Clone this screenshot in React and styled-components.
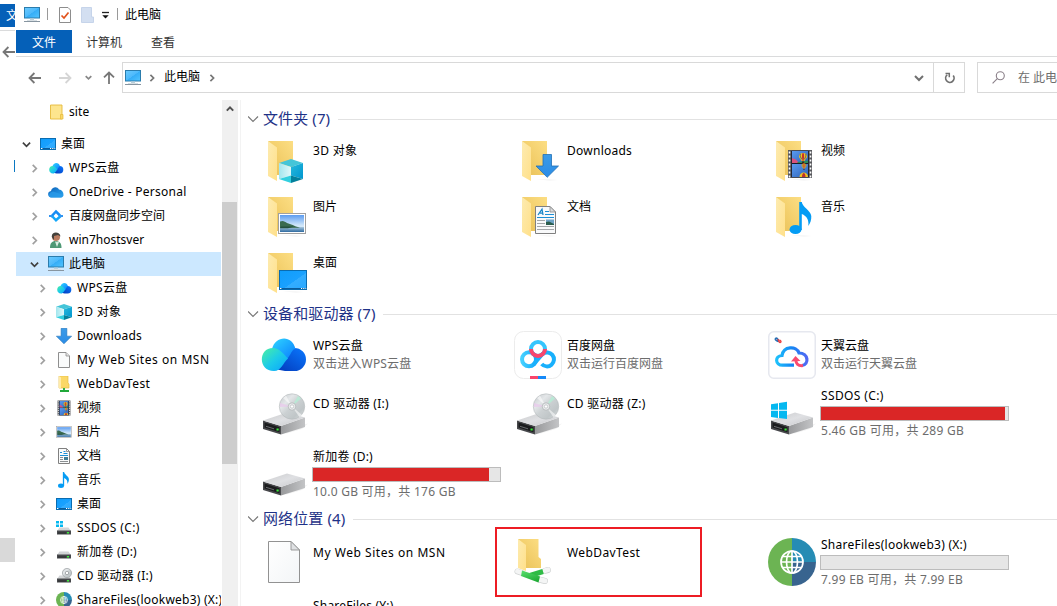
import React from 'react';
import styled, { createGlobalStyle, css } from 'styled-components';

const GlobalStyle = createGlobalStyle`
  * { box-sizing: border-box; }
  body {
    margin: 0;
    overflow: hidden;
    background: #fff;
    color: #000;
    font: 12px/18px "Noto Sans", "Noto Sans CJK SC", sans-serif;
  }
  svg { display: block; flex: none; }
`;

/* ---------- layout ---------- */

const Desktop = styled.div`
  display: flex;
  width: 100vw;
  height: 100vh;
  overflow: hidden;
`;

const BackWindow = styled.div`
  display: flex;
  flex-direction: column;
  flex: none;
  width: 16px;
  height: 100%;
  overflow: hidden;
`;

const BackTab = styled.div`
  width: 15px;
  height: 23px;
  margin-top: 4px;
  padding-left: 6px;
  overflow: hidden;
  background: #0560b8;
  color: #fff;
  line-height: 24px;
  white-space: nowrap;
`;

const BackRule = styled.div`
  width: 15px;
  height: 1px;
  margin-top: 3px;
  background: #dadbdc;
`;

const BackArrow = styled.div`
  height: 14px;
  margin: 14px 0 0 2px;
`;

const BackCaret = styled.div`
  width: 1px;
  height: 12px;
  margin: 101px 0 0 14px;
  background: #0a78c2;
`;

const BackThumb = styled.div`
  width: 15px;
  height: 24px;
  margin-top: 366px;
  background: #d9d9d9;
`;

const Window = styled.div`
  display: flex;
  flex-direction: column;
  flex: 1;
  min-width: 0;
  height: 100%;
`;

const TitleBar = styled.div`
  display: flex;
  align-items: center;
  flex: none;
  height: 30px;
  padding-left: 8px;
`;

const TitleSeparator = styled.span`
  width: 1px;
  height: 12px;
  margin: 0 ${p => p.$after}px 2px ${p => p.$before}px;
  background: #9a9a9a;
`;

const Title = styled.span`
  white-space: nowrap;
`;

const Ribbon = styled.div`
  display: flex;
  flex: none;
  height: 27px;
  border-bottom: 1px solid #dadbdc;
`;

const RibbonTab = styled.div`
  display: flex;
  align-items: center;
  justify-content: center;
  height: 23px;
  width: ${p => p.$width}px;
  color: ${p => (p.$active ? '#fff' : '#333')};
  background: ${p => (p.$active ? '#0560b8' : 'transparent')};
  padding-top: 2px;
`;

const AddressRow = styled.div`
  display: flex;
  flex: none;
  height: 43px;
  padding: 5px 0 7px 12px;
`;

const NavButtons = styled.div`
  display: flex;
  align-items: center;
  width: 94px;
`;

const AddressBox = styled.div`
  display: flex;
  align-items: center;
  width: 811px;
  border: 1px solid #d9d9d9;
  border-right: 0;
  padding-left: 2px;
`;

const Crumb = styled.span`
  margin: 0 8px 1px 8px;
`;

const Gap = styled.span`
  flex: 0 0 ${p => p.$w}px;
`;

const Push = styled.span`
  flex: 1;
`;

const RefreshBox = styled.div`
  display: flex;
  align-items: center;
  justify-content: center;
  width: 32px;
  padding-left: 1px;
  border: 1px solid #d9d9d9;
`;

const SearchBox = styled.div`
  display: flex;
  align-items: center;
  flex: 1;
  gap: 13px;
  margin-left: 12px;
  padding-left: 14px;
  overflow: hidden;
  border: 1px solid #d9d9d9;
  border-right: 0;
  color: #6d6d6d;
  white-space: nowrap;
`;

const Body = styled.div`
  display: flex;
  flex: 1;
  min-height: 0;
`;

const NavPane = styled.div`
  display: flex;
  flex-direction: column;
  flex: none;
  width: 206px;
  overflow: hidden;
`;

const NavRow = styled.div`
  display: flex;
  align-items: center;
  flex: none;
  width: 205px;
  height: 24px;
  padding-left: ${p => 5 + p.$depth * 8}px;
  margin-bottom: ${p => p.$after || 0}px;
  overflow: hidden;
  white-space: nowrap;
  letter-spacing: ${p => p.$spacing || 0}px;
  background: ${p => (p.$selected ? '#cce8ff' : 'transparent')};
`;

const NavChevron = styled.span`
  display: flex;
  align-items: center;
  justify-content: center;
  flex: none;
  width: 11px;
  margin-right: 8px;
`;

const NavLabel = styled.span`
  flex: none;
  margin-left: 5px;
`;

const ScrollTrack = styled.div`
  display: flex;
  flex-direction: column;
  align-items: flex-start;
  flex: none;
  width: 16px;
  background: #f0f0f0;
`;

const ScrollArrow = styled.div`
  display: flex;
  align-items: center;
  justify-content: center;
  width: 15px;
  height: 18px;
`;

const ScrollThumb = styled.div`
  width: 15px;
  height: 262px;
  margin-top: 84px;
  background: #cdcdcd;
`;

const Content = styled.div`
  position: relative;
  flex: 1;
  min-width: 0;
  margin-left: 2px;
  padding-top: 8px;
  overflow: hidden;
  border-left: 1px solid #f3f3f3;
`;

const GroupHeader = styled.div`
  display: flex;
  align-items: center;
  height: 22px;
  margin-bottom: ${p => p.$after}px;
  padding-left: 7px;
  color: #1e3287;
  font-size: 15px;
  letter-spacing: 0.1px;
  white-space: nowrap;
`;

const GroupName = styled.span`
  margin: 0 8px 2px 4px;
`;

const GroupRule = styled.span`
  flex: 1;
  height: 1px;
  background: #e2e2e2;
`;

const TileRow = styled.div`
  display: flex;
  height: ${p => p.$height}px;
  padding-left: 19px;
`;

const Tile = styled.div`
  display: flex;
  align-items: flex-start;
  flex: none;
  width: 254px;
  gap: 4px;
`;

const TileText = styled.div`
  margin-top: ${p => p.$top}px;
  white-space: nowrap;
`;

const textLine = css`
  height: 18px;
  padding-left: 1px;
  letter-spacing: ${p => p.$spacing || 0}px;
`;

const Name = styled.div`
  ${textLine}
`;

const Detail = styled.div`
  ${textLine}
  color: #6d6d6d;
`;

const UsageBar = styled.div`
  width: 189px;
  height: 15px;
  margin: 1px 0;
  border: 1px solid #bcbcbc;
  background: #e6e6e6;
`;

const UsageFill = styled.div`
  height: 100%;
  background: #da2626;
`;

const Highlight = styled.div`
  position: absolute;
  left: 254px;
  top: 427px;
  width: 207px;
  height: 70px;
  border: 2px solid #ed1c24;
`;

const DefsSvg = styled.svg`
  position: absolute;
  width: 0;
  height: 0;
`;

/* ---------- drawings ---------- */

const Stops = ({ of }) => of.map(([o, c]) => <stop key={o} offset={o} stopColor={c} />);

const Gradients = () => (
  <DefsSvg>
    <defs>
      <linearGradient id="screen" x1="0" y1="0" x2="1" y2="1"><Stops of={[[0, '#6ccbff'], [0.5, '#4db9fb'], [0.52, '#35adf6'], [1, '#52c4ff']]} /></linearGradient>
      <linearGradient id="desk" x1="0" y1="0" x2="1" y2="1"><Stops of={[[0, '#0f9dfb'], [0.55, '#1aa1ff'], [0.56, '#33adff'], [1, '#2aa8ff']]} /></linearGradient>
      <linearGradient id="folderBack" x1="0" y1="1" x2="1" y2="0"><Stops of={[[0, '#e8c057'], [0.5, '#f3cf6c'], [1, '#fcde84']]} /></linearGradient>
      <linearGradient id="folderFront" x1="0" y1="0" x2="1" y2="1"><Stops of={[[0, '#fdebb0'], [1, '#ffe08a']]} /></linearGradient>
      <linearGradient id="driveTop" x1="0" y1="0" x2="1" y2="1"><Stops of={[[0, '#c9cacc'], [0.5, '#dfe0e3'], [1, '#c6c7ca']]} /></linearGradient>
      <linearGradient id="driveSide" x1="0" y1="0" x2="1" y2="0"><Stops of={[[0, '#98999b'], [1, '#c3c4c6']]} /></linearGradient>
      <linearGradient id="disc" x1="0" y1="0" x2="1" y2="1"><Stops of={[[0, '#c2c6c9'], [0.3, '#e4e7e9'], [0.5, '#ccd1d3'], [0.75, '#c0c6c8'], [1, '#e0e2e3']]} /></linearGradient>
      <linearGradient id="cloudLeft" x1="0" y1="0" x2="1" y2="1"><Stops of={[[0, '#4af0a2'], [0.5, '#1dcbe8'], [1, '#08a2ff']]} /></linearGradient>
      <linearGradient id="cloudTop" x1="0" y1="0" x2="1" y2="1"><Stops of={[[0, '#2fd6ff'], [1, '#0a7cff']]} /></linearGradient>
      <linearGradient id="cloudRight" x1="1" y1="0" x2="0" y2="1"><Stops of={[[0, '#0a78ff'], [1, '#0338b8']]} /></linearGradient>
      <linearGradient id="arrow" x1="0" y1="0" x2="0" y2="1"><Stops of={[[0, '#3b9be8'], [1, '#2b8ce6']]} /></linearGradient>
      <linearGradient id="cubeLeft" x1="0" y1="0" x2="1" y2="0"><Stops of={[[0, '#a2e6ee'], [1, '#e0f7f9']]} /></linearGradient>
      <linearGradient id="cubeRight" x1="0" y1="0" x2="1" y2="1"><Stops of={[[0, '#27b9dc'], [1, '#0096cf']]} /></linearGradient>
      <linearGradient id="sky" x1="0" y1="0" x2="0" y2="1"><Stops of={[[0, '#5c9cf0'], [0.6, '#cfe6fa'], [1, '#e6f2fa']]} /></linearGradient>
      <linearGradient id="sea" x1="0" y1="0" x2="0" y2="1"><Stops of={[[0, '#a9c8de'], [1, '#2f6aa0']]} /></linearGradient>
      <linearGradient id="film" x1="0" y1="0" x2="1" y2="1"><Stops of={[[0, '#5a9bf0'], [1, '#2e62b8']]} /></linearGradient>
      <linearGradient id="paper" x1="0" y1="0" x2="1" y2="1"><Stops of={[[0, '#ffffff'], [1, '#f3f5f7']]} /></linearGradient>
      <linearGradient id="tyCloud" x1="0" y1="0" x2="1" y2="0"><Stops of={[[0, '#1ec1fb'], [0.5, '#1486f4'], [1, '#5269f2']]} /></linearGradient>
      <linearGradient id="baiduRing" x1="0" y1="0" x2="1" y2="0"><Stops of={[[0, '#45d0ff'], [1, '#10a8fb']]} /></linearGradient>
      <linearGradient id="oneDrive" x1="0" y1="0" x2="1" y2="1"><Stops of={[[0, '#0f5eb4'], [0.5, '#1c86d8'], [1, '#2aa6ee']]} /></linearGradient>
      <linearGradient id="cable" x1="0" y1="0" x2="0.5" y2="1"><Stops of={[[0, '#5be070'], [1, '#22ad38']]} /></linearGradient>
    </defs>
  </DefsSvg>
);

const Chevron = ({ dir = 'right', size = 7, color = '#9a9a9a', weight = 1.7 }) => {
  const d = { right: 'M3 1 7 5 3 9', down: 'M1 3 5 7 9 3', up: 'M1 7 5 3 9 7' }[dir];
  return (
    <svg width={size} height={size} viewBox="0 0 10 10" fill="none" stroke={color} strokeWidth={(weight * 10) / size}>
      <path d={d} />
    </svg>
  );
};

const GroupChevron = () => (
  <svg width="11" height="11" viewBox="0 0 11 11" fill="none" stroke="#777" strokeWidth="1.2">
    <path d="M0 2.500 5 7.500 10 2.500" />
  </svg>
);

const Arrow = ({ color, rotate = 0 }) => (
  <svg width="14" height="14" viewBox="0 0 14 14" fill="none" stroke={color} strokeWidth="1.8">
    <g transform={`rotate(${rotate} 7 7)`}>
      <path d="M1.5 7H13M6.4 2 1.5 7 6.4 12" />
    </g>
  </svg>
);

const Computer = () => (
  <svg width="16" height="16" viewBox="0 0 16 16">
    <rect x=".5" y=".5" width="15" height="10.5" fill="url(#screen)" stroke="#2b7cac" />
    <path d="M6 11.5h4v1.5H6z" fill="#b9cfda" />
    <path d="M0 14h16v1H0z" fill="#8795a0" />
    <path d="M3 13h10v1H3z" fill="#d7dfe4" />
  </svg>
);

const DesktopShape = ({ x, y, w, h }) => (
  <g>
    <rect x={x + 0.5} y={y + 0.5} width={w - 1} height={h - 1} fill="url(#desk)" stroke="#0a6cb0" />
    <path d={`M${x + 1} ${y + h - 1.5}H${x + w - 1}`} stroke="#0b5c9c" />
    <path d={`M${x + 1} ${y + h - 1.5}h1.4M${x + w - 6} ${y + h - 1.5}h1.2m1 0h1.2m1 0h.8`} stroke="#fff" />
  </g>
);

const CubeShape = () => (
  <g>
    <path d="M12 0 24 4 12 8 0 4z" fill="#45c5d8" />
    <path d="M0 4 12 8V16.5L0 20z" fill="url(#cubeLeft)" />
    <path d="M24 4 12 8V16.5L24 20z" fill="url(#cubeRight)" />
    <path d="M0 20 12 16.5V24z" fill="#32cfdf" />
    <path d="M24 20 12 16.5V24z" fill="#03809c" />
  </g>
);

const ArrowShape = () => (
  <path d="M7.5.5h8.500V12h7L11.700 23.300.5 12h7z" fill="url(#arrow)" stroke="#2270b5" strokeWidth=".8" />
);

const PictureShape = () => (
  <g>
    <rect x=".5" y=".5" width="27" height="20" fill="#fff" stroke="#a0a0a0" />
    <rect x="2" y="2" width="24" height="17" fill="url(#sky)" />
    <rect x="2" y="14" width="24" height="5" fill="url(#sea)" />
    <path d="M2 8.500c3-1.500 5 0 7 1.500 4 1 7 3 13 4.800L2 15z" fill="#3a6b50" />
    <path d="M3 13.500h13l-6 1.800H2z" fill="#24503f" />
  </g>
);

const DocShape = () => (
  <g>
    <path d="M.5.5H15L20.500 6V27.500H.5z" fill="#f8f9fa" stroke="#808080" />
    <path d="M15 .5V6h5.500z" fill="#d9dbdd" stroke="#8a8a8a" strokeWidth=".8" />
    <path d="M3 9 7 3.200 8 9M5 7.200H8" fill="none" stroke="#1886c8" strokeWidth="1.300" />
    <path d="M10 5.500h4M10 8.500h9M2 11.500h17" stroke="#1b8fd6" strokeWidth="1" />
    <path d="M2 14.500h8M2 17.500h8M2 20.500h17M2 23.500h17" stroke="#a3a6a9" />
    <rect x="11" y="13.500" width="8" height="5.500" fill="#6ea3c6" />
    <path d="M11 16 14 15.500 19 18v1h-8z" fill="#2a5d4e" />
  </g>
);

const SmallDoc = () => (
  <g>
    <path d="M2.500.5H10.500L13.500 3.500V15.500h-11z" fill="#fafbfb" stroke="#808080" />
    <path d="M10.500 .5V3.500h3" fill="none" stroke="#808080" strokeWidth=".8" />
    <path d="M4 4.500h2M7.500 3.500h2M7.500 5.500h4M4 7.500h8" stroke="#1b8fd6" />
    <path d="M4 9.500h3M4 11.500h3M4 13.500h8" stroke="#8b8f92" />
    <rect x="8" y="9" width="4" height="3" fill="#3f7d96" />
  </g>
);

const Balloon = ({ x, y, s = 1 }) => (
  <g transform={`translate(${x} ${y}) scale(${s})`}>
    <path d="M0 3.600C0-1.200 9-1.200 9 3.600 9 6 6.500 7 6 9H3C2.500 7 0 6 0 3.600z" fill="#f2c520" />
    <path d="M3.700 .2C3 3 3.500 6 4 9h1C5.500 6 6 3 5.300 .2z" fill="#c62c2c" />
    <path d="M1.500 1C.8 3 2 5 3 7M7.500 1C8.200 3 7 5 6 7" fill="none" stroke="#28337e" strokeWidth=".8" />
    <path d="M3.300 9.500h2.400v2H3.300z" fill="#402818" />
  </g>
);

const FilmShape = () => (
  <g>
    <rect width="24" height="28" fill="#57585c" />
    <rect x="3.200" y=".8" width="17.600" height="26.400" fill="#171c2a" />
    <rect x="4" y="1" width="16" height="12" fill="url(#film)" />
    <rect x="4" y="14" width="16" height="13" fill="url(#film)" />
    <path d="M4 8 8 9.500l3 3.500H4z" fill="#d9527d" />
    <path d="M10 12 20 10.500V13H9z" fill="#2b8d57" />
    <Balloon x="11" y="3" s=".9" />
    <Balloon x="13.500" y="13.500" s=".55" />
    <path d="M11.500 27c0-6 8.500-6 8.500 0z" fill="#f1c21e" />
    <path d="M14 27c0-5.500 3.500-5.500 3.500 0z" fill="#ba2f35" />
    <path d="M1.500 1.500v26M22.500 1.500v26" stroke="#fff" strokeWidth="1.600" strokeDasharray="2 2" />
  </g>
);

const NoteShape = () => (
  <g fill="#059cf4">
    <ellipse cx="6" cy="27.500" rx="6" ry="4.500" />
    <path d="M9.700 0h2.600c.4 5 9 8.500 9.500 14 .2 4-1 7-3 10 .8-6-1.500-10-6.500-12V28H9.700z" />
  </g>
);

const FolderShape = () => (
  <g>
    <path d="M22 41h14l8 1-8 1z" fill="#000" opacity=".03" />
    <path d="M8 3H33V37H15z" fill="url(#folderBack)" />
    <path d="M8 3 17 9.500V43L8 38z" fill="url(#folderFront)" />
  </g>
);

const DriveShape = () => (
  <g>
    <path d="M34 38 48 34.500 42 40 25 45z" fill="#000" opacity=".05" />
    <path d="M3 31.500 21 37V45.500L3 40z" fill="#47484b" />
    <path d="M4.500 33.500 19.500 38.200V43.300L4.500 38.500z" fill="#1b1c1e" />
    <path d="M6 37.300 14 39.800" stroke="#737578" strokeWidth=".9" />
    <rect x="16.500" y="39.500" width="2.200" height="2" fill="#3bea3b" />
    <path d="M21 37 45 28.500V38L21 45.500z" fill="url(#driveSide)" />
    <path d="M3 31.500 27 23.500 45 28.500 21 37z" fill="url(#driveTop)" />
  </g>
);

const CloudShape = () => (
  <g>
    <path d="M25 40h9.500a11.500 11.500 0 0 0 0-23c-7 0-9 5-20 21z" fill="url(#cloudRight)" />
    <path d="M12 18C15 5 32 3 35.500 18 32 17.500 31 24 27 28L16 22z" fill="url(#cloudTop)" />
    <path d="M14 40C-2 40-2 17 13 17c5 0 9 4 15 10.500C23 32 21 40 14 40z" fill="url(#cloudLeft)" />
  </g>
);

const GlobeShape = () => (
  <g>
    <path d="M24 0a24 24 0 0 0 0 48z" fill="#6cb453" />
    <path d="M24 0a24 24 0 0 1 24 24H24z" fill="#268cb4" />
    <path d="M48 24a24 24 0 0 1-24 24V24z" fill="#38648f" />
    <g fill="none" stroke="#fff" strokeWidth="1.700">
      <circle cx="24" cy="24" r="11" />
      <ellipse cx="24" cy="24" rx="5.500" ry="11" />
      <path d="M24 13v22M13 24h22M15 18.500h18M15 29.500h18" />
    </g>
  </g>
);

const PageShape = () => (
  <g>
    <path d="M8.500 3.500H31L39.500 12V44.500H8.500z" fill="url(#paper)" stroke="#929292" />
    <path d="M31 3.500V12h8.500z" fill="#dfe1e3" stroke="#929292" strokeWidth=".9" />
  </g>
);

const WinLogo = () => (
  <path d="M3 15.300 10 14.200V20.800H3zM11 14 19 12.800V20.800H11zM3 21.800H10V29L3 28zM11 21.800H19V30L11 29z" fill="#05b8f0" />
);

const at = (x, y, child, s = 1) => <g transform={`translate(${x} ${y}) scale(${s})`}>{child}</g>;

const tileArt = {
  cube: <><FolderShape />{at(19, 21, <CubeShape />)}</>,
  download: <><FolderShape />{at(21.500, 16, <ArrowShape />)}</>,
  video: <><FolderShape />{at(20, 12, <FilmShape />)}</>,
  picture: <><FolderShape />{at(18, 19, <PictureShape />)}</>,
  document: <><FolderShape />{at(21, 12, <DocShape />)}</>,
  music: <><FolderShape />{at(21.500, 8, <NoteShape />)}</>,
  desktop: <><FolderShape /><DesktopShape x={19} y={20} w={28} h={20} /></>,
  wps: <CloudShape />,
  drive: <DriveShape />,
  winDrive: <><DriveShape /><WinLogo /></>,
  page: <PageShape />,
  globe: <GlobeShape />,
  cd: (
    <>
      <DriveShape />
      <circle cx="32" cy="17.500" r="12.700" fill="url(#disc)" stroke="#b6babc" strokeWidth=".6" />
      <path d="M32 17.500 23 9l3-2.500zM32 17.500 42 26l-2.500 2.300z" fill="#fff" opacity=".55" />
      <path d="M32 17.500 20 14v4z" fill="#e9c8ec" opacity=".7" />
      <path d="M32 17.500 38 7l3 2.500z" fill="#b4eed5" opacity=".8" />
      <circle cx="32" cy="17.500" r="3.700" fill="#eceeef" stroke="#a9adaf" strokeWidth=".7" />
      <circle cx="32" cy="17.500" r="1.700" fill="#fff" stroke="#b5b9bb" strokeWidth=".7" />
    </>
  ),
  baidu: (
    <>
      <rect x=".5" y=".5" width="47" height="47" rx="9" fill="#fff" stroke="#ececec" />
      <g fill="none" strokeWidth="4">
        <circle cx="24" cy="18" r="7" stroke="#35c5fd" />
        <circle cx="15" cy="28.300" r="7" stroke="url(#baiduRing)" />
        <path d="M19.500 33.500 28.500 23a7 7 0 1 1-.8 10" stroke="#18b0fc" />
        <path d="M17 18a7 7 0 0 0 14 0" stroke="#f9456c" />
      </g>
      <path d="M16 45h8v3h-8z" fill="#fa466b" />
      <path d="M24 45h8v3h-8z" fill="#168af8" />
    </>
  ),
  tianyi: (
    <>
      <rect x=".75" y=".75" width="46.500" height="46.500" rx="5" fill="#fff" stroke="#e6e8ef" strokeWidth="1.500" />
      <path d="M10.500 11C11 7.500 7.500 6 7.300 8.200c0 1.500 2.500 1 2.200 2.800" fill="none" stroke="#2970b5" strokeWidth="1.600" />
      <path d="M9.500 8.500c1.500 0 1 3 2.500 3s1.200-2.500-.6-2.300" fill="none" stroke="#ed4040" strokeWidth="1.400" />
      <path d="M26 34.200H14.500C7 34.200 6.500 25 14 24.500 15.500 15 28.500 14.500 31 22 40.500 22 41.500 33.500 34 34.500" fill="none" stroke="url(#tyCloud)" strokeWidth="3.200" />
      <path d="M27.800 29c.3 4 2 6 7.200 5.600" fill="none" stroke="#f94b70" strokeWidth="3" />
      <path d="M23 30.500 27.500 25l5 5z" fill="#f94b70" />
    </>
  ),
  webdav: (
    <>
      <path d="M4 1H24.500V19L27 21V30H10z" fill="url(#folderBack)" />
      <path d="M4 1 12 7V33L4 30z" fill="url(#folderFront)" />
      <g fill="none" strokeLinecap="round">
        <path d="M3.500 33.500 8 35M31 32.800 34 32M25 41.500 31 43" stroke="#cfd2d2" strokeWidth="6" />
        <path d="M3.500 33.300 8 34.800M31 32.600 34 31.800M25 41.300 31 42.800" stroke="#f4f5f5" strokeWidth="4.800" />
        <path d="M16 37.500 29 33.500" stroke="#2fbb45" strokeWidth="5" strokeLinecap="butt" />
        <path d="M8 32.500 26 38.500 24.500 44.500 7 38z" fill="url(#cable)" stroke="none" />
      </g>
    </>
  ),
};

const TileIcon = ({ kind }) => (
  <svg width="48" height="48" viewBox="0 0 48 48" overflow="visible">{tileArt[kind]}</svg>
);

const smallDrive = (
  <g>
    <path d="M3.500 7.500h9L15 11H1z" fill="#d2d4d6" />
    <rect x="1" y="10.500" width="14" height="4" fill="#46484b" />
    <path d="M2 13h8" stroke="#292b2d" />
    <rect x="11" y="12" width="2" height="1.500" fill="#3bea3b" />
  </g>
);

const navArt = {
  folder: (
    <>
      <path d="M2.500 1H14V15H2.500z" fill="#fde58e" stroke="#e5b93a" strokeWidth=".9" />
      <path d="M12.500 10.500h2.500V15h-2.500z" fill="#fbd867" stroke="#e5b93a" strokeWidth=".7" />
    </>
  ),
  desktop: <DesktopShape x={0} y={2} w={16} h={12} />,
  wps: at(0.6, 0.6, <CloudShape />, 0.32),
  onedrive: (
    <>
      <path d="M3.500 13.500C-1 13-.8 7.500 3 7c1-4 6-5 8-1.500C16 6 17 12.500 13 13.500z" fill="url(#oneDrive)" />
      <path d="M5 7.500 15.500 11c-.3 2-1.500 2.500-3 2.500H4C-.5 13.500.5 8 5 7.500z" fill="#2b9be8" opacity=".8" />
    </>
  ),
  sync: (
    <g fill="none" strokeWidth="2.500">
      <path d="M3 8.800 8 3.500 12 7.500" stroke="#168cf4" />
      <path d="M4 8 8 12.300 13 7.800" stroke="#13a7fa" />
      <path d="M1 8h3M12 8h3" stroke="#3194f1" strokeWidth="2" />
    </g>
  ),
  user: (
    <>
      <path d="M2 16C2 11 4 9 7.500 9c4 0 6 2 6 7z" fill="#4e9875" />
      <path d="M7 9.500 9 15 11 10z" fill="#d8eee2" />
      <circle cx="8" cy="5" r="4" fill="#ba7c61" />
      <path d="M3.800 5C3-1 12-1 12.500 4.500L10 3 6 4v4z" fill="#44423d" />
    </>
  ),
  cube: at(0, 0, <CubeShape />, 0.666),
  download: at(0, 0, <ArrowShape />, 0.68),
  page: (
    <>
      <path d="M2.500.5H10L13.500 4V15.500h-11z" fill="#fafbfb" stroke="#8f8f8f" />
      <path d="M10 .5V4h3.500" fill="#e3e3e3" stroke="#8f8f8f" strokeWidth=".8" />
    </>
  ),
  webdav: (
    <>
      <path d="M3 0H12V7l1 1v4H3z" fill="#fbd867" stroke="#e6be45" strokeWidth=".7" />
      <path d="M3 0 5 1.500V13L3 12z" fill="#ffebaa" />
      <path d="M8 12v3M4 15h9" stroke="#20a83a" strokeWidth="1.800" />
    </>
  ),
  video: at(1.5, 0.5, <FilmShape />, 0.54),
  picture: at(0, 2, <PictureShape />, 0.571),
  document: <SmallDoc />,
  music: at(2, 0, <NoteShape />, 0.5),
  winDrive: <>{smallDrive}<path d="M0 1h3v2.500H0zM4 1h3v2.500H4zM0 4.500h3V7H0zM4 4.500h3V7H4z" fill="#05b8f0" /></>,
  drive: smallDrive,
  cd: (
    <>
      {smallDrive}
      <circle cx="11" cy="5" r="4.600" fill="url(#disc)" stroke="#9b9fa2" strokeWidth=".7" />
      <circle cx="11" cy="5" r="1.700" fill="#fff" stroke="#8d9194" strokeWidth=".7" />
    </>
  ),
  globe: at(0, 0, <GlobeShape />, 0.333),
};

const NavIcon = ({ kind }) =>
  kind === 'computer' ? <Computer /> : <svg width="16" height="16" viewBox="0 0 16 16">{navArt[kind]}</svg>;

const CheckPage = () => (
  <svg width="12" height="16" viewBox="0 0 12 16">
    <path d="M.5.5H9L11.500 3V15.500H.5z" fill="#fff" stroke="#8d8d8d" />
    <path d="M2.500 8.500 5 11 9.500 5.500" fill="none" stroke="#e2531d" strokeWidth="1.700" />
  </svg>
);

const GhostFolder = () => (
  <svg width="13" height="16" viewBox="0 0 13 16">
    <path d="M.5.5H10.500V10H12.500V15.500H.5z" fill="#d3dff1" stroke="#c6d4ea" />
  </svg>
);

const MenuCaret = () => (
  <svg width="7" height="8" viewBox="0 0 7 8">
    <path d="M0 1.500h7" stroke="#222" strokeWidth="1.300" />
    <path d="M.3 4.200h6.400L3.500 7.600z" fill="#111" />
  </svg>
);

const RefreshIcon = () => (
  <svg width="12" height="12" viewBox="0 0 12 12" fill="none" stroke="#707070" strokeWidth="1.700">
    <path d="M3.200 2.900A4.200 4.200 0 1 0 9.200 3.600" />
    <path d="M1.500 1.500H5.300V5.300" strokeWidth="1.500" />
  </svg>
);

const SearchIcon = () => (
  <svg width="13" height="13" viewBox="0 0 13 13" fill="none" stroke="#8a7f88" strokeWidth="1.100">
    <circle cx="8.300" cy="4.700" r="4" />
    <path d="M5.300 7.700.6 12.400" />
  </svg>
);

/* ---------- data ---------- */

const navItems = [
  { depth: 1, icon: 'folder', label: 'site', leaf: true, after: 8, spacing: 0.1 },
  { depth: 0, icon: 'desktop', label: '桌面', open: true },
  { depth: 1, icon: 'wps', label: 'WPS云盘', spacing: 0.3 },
  { depth: 1, icon: 'onedrive', label: 'OneDrive - Personal', spacing: 0.26 },
  { depth: 1, icon: 'sync', label: '百度网盘同步空间' },
  { depth: 1, icon: 'user', label: 'win7hostsver' },
  { depth: 1, icon: 'computer', label: '此电脑', open: true, selected: true },
  { depth: 2, icon: 'wps', label: 'WPS云盘', spacing: 0.3 },
  { depth: 2, icon: 'cube', label: '3D 对象', spacing: 0.3 },
  { depth: 2, icon: 'download', label: 'Downloads', spacing: 0.25 },
  { depth: 2, icon: 'page', label: 'My Web Sites on MSN', spacing: 0.54 },
  { depth: 2, icon: 'webdav', label: 'WebDavTest', spacing: 0.4 },
  { depth: 2, icon: 'video', label: '视频' },
  { depth: 2, icon: 'picture', label: '图片' },
  { depth: 2, icon: 'document', label: '文档' },
  { depth: 2, icon: 'music', label: '音乐' },
  { depth: 2, icon: 'desktop', label: '桌面' },
  { depth: 2, icon: 'winDrive', label: 'SSDOS (C:)', spacing: 0.38 },
  { depth: 2, icon: 'drive', label: '新加卷 (D:)', spacing: 0.2 },
  { depth: 2, icon: 'cd', label: 'CD 驱动器 (I:)', spacing: 0.25 },
  { depth: 2, icon: 'globe', label: 'ShareFiles(lookweb3) (X:)', spacing: 0.24 },
];

const groups = [
  {
    name: '文件夹 (7)',
    after: 8,
    rows: [
      { height: 56, tiles: [
        { icon: 'cube', name: '3D 对象', top: 4, spacing: 0.3 },
        { icon: 'download', name: 'Downloads', top: 4, spacing: 0.25 },
        { icon: 'video', name: '视频', top: 4 },
      ] },
      { height: 56, tiles: [
        { icon: 'picture', name: '图片', top: 4 },
        { icon: 'document', name: '文档', top: 4 },
        { icon: 'music', name: '音乐', top: 4 },
      ] },
      { height: 53, tiles: [{ icon: 'desktop', name: '桌面', top: 4 }] },
    ],
  },
  {
    name: '设备和驱动器 (7)',
    after: 6,
    rows: [
      { height: 58, tiles: [
        { icon: 'wps', name: 'WPS云盘', detail: '双击进入WPS云盘', top: 6, spacing: 0.2, detailSpacing: 0.15 },
        { icon: 'baidu', name: '百度网盘', detail: '双击运行百度网盘', top: 6 },
        { icon: 'tianyi', name: '天翼云盘', detail: '双击运行天翼云盘', top: 6 },
      ] },
      { height: 61, tiles: [
        { icon: 'cd', name: 'CD 驱动器 (I:)', top: 6, spacing: 0.25 },
        { icon: 'cd', name: 'CD 驱动器 (Z:)', top: 6, spacing: 0.25 },
        { icon: 'winDrive', name: 'SSDOS (C:)', used: 184, detail: '5.46 GB 可用，共 289 GB', top: -2, spacing: 0.38, detailSpacing: 0.27 },
      ] },
      { height: 58, tiles: [
        { icon: 'drive', name: '新加卷 (D:)', used: 176, detail: '10.0 GB 可用，共 176 GB', top: -2, spacing: 0.2, detailSpacing: 0.25 },
      ] },
    ],
  },
  {
    name: '网络位置 (4)',
    after: 8,
    rows: [
      { height: 56, tiles: [
        { icon: 'page', name: 'My Web Sites on MSN', top: 6, spacing: 0.54 },
        { icon: 'webdav', name: 'WebDavTest', top: 6, spacing: 0.4 },
        { icon: 'globe', name: 'ShareFiles(lookweb3) (X:)', used: 0, detail: '7.99 EB 可用，共 7.99 EB', top: -2, spacing: 0.26, detailSpacing: 0.25 },
      ] },
      { height: 56, tiles: [{ icon: null, name: 'ShareFiles (Y:)', top: 3, spacing: 0.2 }] },
    ],
  },
];

const FileTile = ({ icon, name, detail, used, top, spacing, detailSpacing }) => (
  <Tile>
    <TileIcon kind={icon} />
    <TileText $top={top}>
      <Name $spacing={spacing}>{name}</Name>
      {used !== undefined && (
        <UsageBar><UsageFill style={{ width: used }} /></UsageBar>
      )}
      {detail && <Detail $spacing={detailSpacing}>{detail}</Detail>}
    </TileText>
  </Tile>
);

export default function App() {
  return (
    <Desktop>
      <GlobalStyle />
      <Gradients />
      <BackWindow>
        <BackTab>文</BackTab>
        <BackRule />
        <BackArrow><Arrow color="#777" /></BackArrow>
        <BackCaret />
        <BackThumb />
      </BackWindow>
      <Window>
        <TitleBar>
          <Computer />
          <TitleSeparator $before={7} $after={11} />
          <CheckPage />
          <Gap $w={10} />
          <GhostFolder />
          <Gap $w={8} />
          <MenuCaret />
          <TitleSeparator $before={8} $after={7} />
          <Title>此电脑</Title>
        </TitleBar>
        <Ribbon>
          <RibbonTab $width={56} $active>文件</RibbonTab>
          <RibbonTab $width={64}>计算机</RibbonTab>
          <RibbonTab $width={54}>查看</RibbonTab>
        </Ribbon>
        <AddressRow>
          <NavButtons>
            <Arrow color="#777" />
            <Gap $w={16} />
            <Arrow color="#d5d5d5" rotate={180} />
            <Gap $w={13} />
            <Chevron dir="down" size={7} color="#888" />
            <Gap $w={10} />
            <Arrow color="#777" rotate={90} />
          </NavButtons>
          <AddressBox>
            <Computer />
            <Gap $w={7} />
            <Chevron size={8} color="#777" />
            <Crumb>此电脑</Crumb>
            <Chevron size={8} color="#777" />
            <Push />
            <Chevron dir="down" size={10} color="#707070" weight={2} />
            <Gap $w={9} />
          </AddressBox>
          <RefreshBox><RefreshIcon /></RefreshBox>
          <SearchBox>
            <SearchIcon />
            <span>在 此电脑 中搜索</span>
          </SearchBox>
        </AddressRow>
        <Body>
          <NavPane>
            {navItems.map((n, i) => (
              <NavRow key={i} $depth={n.depth} $after={n.after} $selected={n.selected} $spacing={n.spacing}>
                <NavChevron>
                  {!n.leaf && <Chevron dir={n.open ? 'down' : 'right'} size={9} color={n.open ? '#404040' : '#a0a0a0'} />}
                </NavChevron>
                <NavIcon kind={n.icon} />
                <NavLabel>{n.label}</NavLabel>
              </NavRow>
            ))}
          </NavPane>
          <ScrollTrack>
            <ScrollArrow><Chevron dir="up" size={8} color="#505050" weight={2} /></ScrollArrow>
            <ScrollThumb />
          </ScrollTrack>
          <Content>
            {groups.map(g => (
              <React.Fragment key={g.name}>
                <GroupHeader $after={g.after}>
                  <GroupChevron />
                  <GroupName>{g.name}</GroupName>
                  <GroupRule />
                </GroupHeader>
                {g.rows.map((r, i) => (
                  <TileRow key={i} $height={r.height}>
                    {r.tiles.map(t => <FileTile key={t.name} {...t} />)}
                  </TileRow>
                ))}
              </React.Fragment>
            ))}
            <Highlight />
          </Content>
        </Body>
      </Window>
    </Desktop>
  );
}
